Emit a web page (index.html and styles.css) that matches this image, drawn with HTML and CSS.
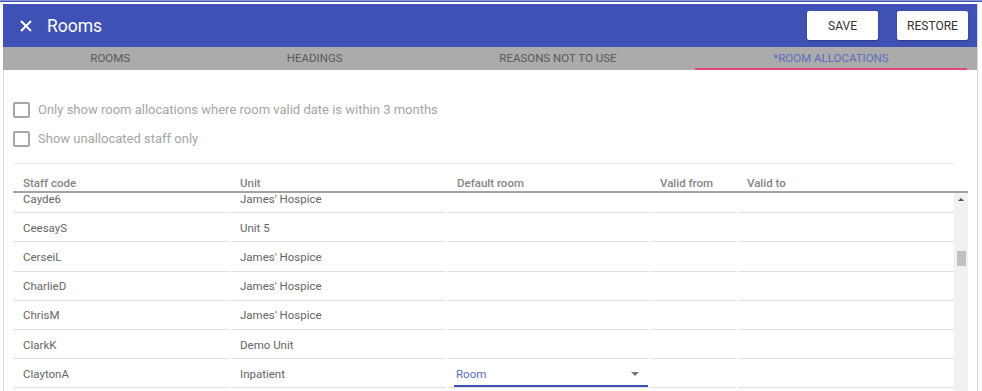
FILE: index.html
```html
<!DOCTYPE html>
<html>
<head>
<meta charset="utf-8">
<link rel="stylesheet" href="styles.css">
</head>
<body>
<div class="topline"></div>
<div class="app">
  <header class="bar">
    <div class="title">
      <svg class="close" width="12" height="12" viewBox="0 0 12 12"><path d="M1 1L11 11M11 1L1 11" stroke="#fff" stroke-width="2" fill="none"/></svg>
      <span class="title-text">Rooms</span>
    </div>
    <div class="actions">
      <button class="btn">SAVE</button>
      <button class="btn">RESTORE</button>
    </div>
  </header>
  <nav class="tabs">
    <div class="tab">ROOMS</div>
    <div class="tab">HEADINGS</div>
    <div class="tab">REASONS NOT TO USE</div>
    <div class="tab active">*ROOM ALLOCATIONS</div>
  </nav>
  <main class="content">
    <div class="options">
      <label class="opt"><span class="box"></span><span>Only show room allocations where room valid date is within 3 months</span></label>
      <label class="opt"><span class="box"></span><span>Show unallocated staff only</span></label>
    </div>
    <div class="divider"></div>
    <div class="thead grid">
      <div class="th">Staff code</div>
      <div class="th">Unit</div>
      <div class="th">Default room</div>
      <div class="th">Valid from</div>
      <div class="th">Valid to</div>
    </div>
    <div class="tbody">
      <div class="rows">
        <div class="rowlist">
          <div class="row grid"><div class="td">Cayde6</div><div class="td">James' Hospice</div><div class="td"></div><div class="td"></div><div class="td"></div></div>
          <div class="row grid"><div class="td">CeesayS</div><div class="td">Unit 5</div><div class="td"></div><div class="td"></div><div class="td"></div></div>
          <div class="row grid"><div class="td">CerseiL</div><div class="td">James' Hospice</div><div class="td"></div><div class="td"></div><div class="td"></div></div>
          <div class="row grid"><div class="td">CharlieD</div><div class="td">James' Hospice</div><div class="td"></div><div class="td"></div><div class="td"></div></div>
          <div class="row grid"><div class="td">ChrisM</div><div class="td">James' Hospice</div><div class="td"></div><div class="td"></div><div class="td"></div></div>
          <div class="row grid"><div class="td">ClarkK</div><div class="td">Demo Unit</div><div class="td"></div><div class="td"></div><div class="td"></div></div>
          <div class="row grid"><div class="td">ClaytonA</div><div class="td">Inpatient</div><div class="td sel-cell"><div class="select"><span>Room</span><span class="caret"></span></div></div><div class="td"></div><div class="td"></div></div>
        </div>
      </div>
      <div class="scrollbar">
        <span class="arrow-up"></span>
        <span class="thumb"></span>
      </div>
    </div>
  </main>
</div>
</body>
</html>
```

FILE: styles.css
```css
* { box-sizing: border-box; }
html, body { margin: 0; padding: 0; background: #fff; }
body { font-family: Roboto, "Liberation Sans", sans-serif; width: 982px; height: 391px; overflow: hidden; }

.topline { height: 2px; background: #3f51b5; border-top: 1px solid #8c97d6; }

.app {
  margin: 2px 0 0 3px;
  width: 975px;
  height: 387px;
  display: flex;
  flex-direction: column;
  border-right: 1px solid #d6d6d6;
}

.bar {
  height: 43px;
  background: #3f51b5;
  display: flex;
  align-items: center;
  justify-content: space-between;
  padding: 0 9px 0 17px;
  flex: none;
}
.title { display: flex; align-items: center; gap: 15px; color: #fff; }
.close { display: block; margin-top: 1px; }
.title-text { font-size: 17.5px; letter-spacing: 0; }
.actions { display: flex; gap: 19px; }
.btn {
  width: 71px;
  height: 29px;
  background: #fff;
  border: none;
  border-radius: 2px;
  box-shadow: 0 1px 2px rgba(0,0,0,0.3);
  font-family: Roboto, "Liberation Sans", sans-serif;
  font-size: 12px;
  color: #333;
  padding: 0;
}

.tabs {
  height: 23px;
  background: #ababab;
  display: flex;
  padding: 0 10px 0 9px;
  flex: none;
}
.tab {
  flex: 1 1 auto;
  text-align: center;
  font-size: 11.5px;
  color: #5a5a5a;
  line-height: 22px;
  border-bottom: 2px solid transparent;
}
.tab.active { color: #5c6bc0; border-bottom-color: #e8457a; }

.content {
  flex: 1;
  border-left: 1px solid #dcdcdc;
  padding: 25px 9px 0 9px;
  display: flex;
  flex-direction: column;
  min-height: 0;
}

.options { display: flex; flex-direction: column; }
.opt {
  height: 29px;
  display: flex;
  align-items: center;
  gap: 8px;
  font-size: 13px;
  color: #a6a6a6;
}
.box {
  width: 17px;
  height: 16px;
  border: 2px solid #a6a6a6;
  border-radius: 2px;
  flex: none;
}

.divider { height: 1px; background: #ececec; margin: 10px 14px 0 0; }

.grid {
  display: grid;
  grid-template-columns: 216px 215px 201px 85px 1fr;
  column-gap: 2px;
}
.thead {
  height: 29px;
  border-bottom: 2px solid #a3a3a3;
}
.th {
  font-size: 11.5px;
  font-weight: 500;
  color: #858585;
  padding: 12px 0 0 10px;
}
.th:nth-child(n+2) { padding-left: 9px; }

.tbody { flex: 1; display: flex; min-height: 0; }
.rows { flex: 1; overflow: hidden; }
.rowlist { margin-top: -9px; }
.row { height: 29.2px; }
.td {
  border-bottom: 1px solid #e0e0e0;
  font-size: 11.5px;
  color: #666;
  display: flex;
  align-items: center;
  padding-left: 10px;
  padding-top: 1px;
}
.td:nth-child(n+2) { padding-left: 9px; }
.sel-cell { padding-left: 6px !important; padding-top: 0; }
.select {
  width: 194px;
  height: 24px;
  margin-top: 3px;
  border-bottom: 2px solid #3f51b5;
  display: flex;
  align-items: center;
  justify-content: space-between;
  padding: 0 9px 0 2px;
  color: #5c6bc0;
  font-size: 11.5px;
}
.caret {
  width: 0; height: 0;
  border-left: 4px solid transparent;
  border-right: 4px solid transparent;
  border-top: 4px solid #777;
}

.scrollbar {
  width: 14px;
  flex: none;
  background: #f1f1f1;
  display: flex;
  flex-direction: column;
  align-items: center;
}
.arrow-up {
  margin-top: 5px;
  width: 0; height: 0;
  border-left: 3px solid transparent;
  border-right: 3px solid transparent;
  border-bottom: 3px solid #505050;
}
.thumb {
  margin-top: 50px;
  width: 9px;
  height: 15px;
  background: #c1c1c1;
}
```
